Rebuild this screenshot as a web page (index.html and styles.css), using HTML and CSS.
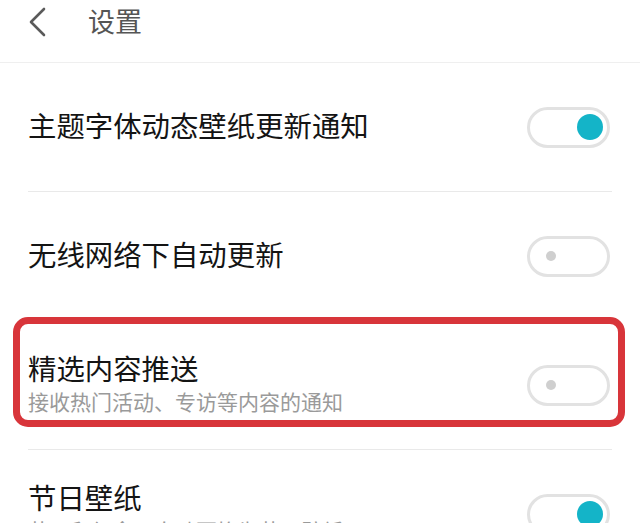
FILE: index.html
```html
<!DOCTYPE html>
<html lang="zh-CN">
<head>
<meta charset="utf-8">
<title>设置</title>
<link rel="stylesheet" href="styles.css">
</head>
<body>
<header class="topbar">
  <svg class="back" width="22" height="30" viewBox="0 0 22 30" aria-hidden="true">
    <path d="M18 2 L5 15 L18 28" fill="none" stroke="#5a5a5a" stroke-width="2.6" stroke-linecap="round" stroke-linejoin="round"/>
  </svg>
  <h1 class="title">设置</h1>
</header>
<main class="list">
  <div class="row">
    <div class="text"><div class="label">主题字体动态壁纸更新通知</div></div>
    <div class="switch on"><span class="knob"></span></div>
  </div>
  <div class="row">
    <div class="text"><div class="label">无线网络下自动更新</div></div>
    <div class="switch"><span class="knob"></span></div>
  </div>
  <div class="row highlighted">
    <div class="text">
      <div class="label">精选内容推送</div>
      <div class="sub">接收热门活动、专访等内容的通知</div>
    </div>
    <div class="switch"><span class="knob"></span></div>
  </div>
  <div class="row">
    <div class="text">
      <div class="label">节日壁纸</div>
      <div class="sub">节日和纪念日自动更换为节日壁纸</div>
    </div>
    <div class="switch on"><span class="knob"></span></div>
  </div>
</main>
</body>
</html>
```
FILE: styles.css
```css
html, body {
  margin: 0;
  padding: 0;
  background: #ffffff;
  overflow: hidden;
}
body {
  font-family: "Noto Sans CJK SC", "Noto Sans", sans-serif;
  color: #151515;
  width: 640px;
  height: 523px;
}
.topbar {
  height: 44px;
  padding-bottom: 18px;
  display: flex;
  align-items: center;
  border-bottom: 1px solid #efefef;
  box-sizing: content-box;
}
.back {
  margin-left: 26px;
}
.title {
  margin: 0 0 0 40px;
  font-size: 27px;
  font-weight: 400;
  color: #555555;
  line-height: 40px;
  padding-bottom: 3px;
}
.list {
  display: flex;
  flex-direction: column;
}
.row {
  height: 128px;
  margin: 0 28px;
  border-bottom: 1px solid #e9e9e9;
  display: flex;
  align-items: center;
  justify-content: space-between;
  position: relative;
}
.text {
  display: flex;
  flex-direction: column;
  padding-bottom: 4px;
}
.label {
  font-size: 28.4px;
  line-height: 36px;
  color: #141414;
}
.sub {
  font-size: 21px;
  line-height: 30px;
  color: #9a9a9a;
}
.switch {
  box-sizing: border-box;
  width: 83px;
  height: 41px;
  border: 3px solid #e2e2e2;
  border-radius: 21px;
  margin-right: 2px;
  display: flex;
  align-items: center;
  justify-content: flex-start;
  padding: 0 0 0 16px;
}
.switch .knob {
  width: 10px;
  height: 10px;
  border-radius: 50%;
  background: #cfcfcf;
}
.switch.on {
  justify-content: flex-end;
  padding: 0 4px 0 0;
}
.switch.on .knob {
  width: 26px;
  height: 26px;
  background: #14b4c8;
}
.highlighted::after {
  content: "";
  position: absolute;
  top: -4px;
  bottom: 22px;
  left: -15px;
  right: -13px;
  border: 7px solid #d8353a;
  border-radius: 15px;
  pointer-events: none;
}
```
